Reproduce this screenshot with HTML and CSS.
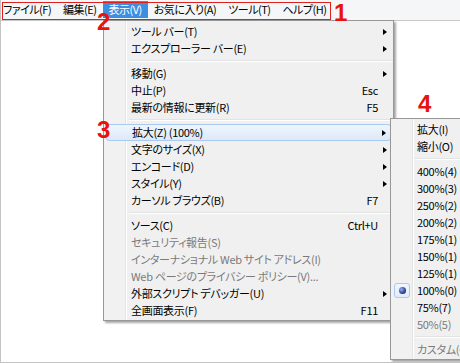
FILE: index.html
```html
<!DOCTYPE html>
<html lang="ja">
<head>
    <meta charset="UTF-8">
    <title>表示メニュー</title>
    <link rel="stylesheet" href="styles.css">
</head>
<body>
    <div class="window">
        <div class="menubar">
            <span class="top-item">ファイル(F)</span>
            <span class="top-item">編集(E)</span>
            <span class="top-item active">表示(V)</span>
            <span class="top-item">お気に入り(A)</span>
            <span class="top-item">ツール(T)</span>
            <span class="top-item">ヘルプ(H)</span>
        </div>
        <div class="page"></div>

        <div class="menu main-menu">
            <div class="item"><span class="label">ツール バー(T)</span><span class="arrow"></span></div>
            <div class="item"><span class="label">エクスプローラー バー(E)</span><span class="arrow"></span></div>
            <div class="sep"></div>
            <div class="item"><span class="label">移動(G)</span><span class="arrow"></span></div>
            <div class="item"><span class="label">中止(P)</span><span class="key">Esc</span></div>
            <div class="item"><span class="label">最新の情報に更新(R)</span><span class="key">F5</span></div>
            <div class="sep"></div>
            <div class="item hover"><span class="label">拡大(Z) (100%)</span><span class="arrow"></span></div>
            <div class="item"><span class="label">文字のサイズ(X)</span><span class="arrow"></span></div>
            <div class="item"><span class="label">エンコード(D)</span><span class="arrow"></span></div>
            <div class="item"><span class="label">スタイル(Y)</span><span class="arrow"></span></div>
            <div class="item"><span class="label">カーソル ブラウズ(B)</span><span class="key">F7</span></div>
            <div class="sep"></div>
            <div class="item"><span class="label">ソース(C)</span><span class="key">Ctrl+U</span></div>
            <div class="item disabled"><span class="label">セキュリティ報告(S)</span></div>
            <div class="item disabled"><span class="label">インターナショナル Web サイト アドレス(I)</span></div>
            <div class="item disabled"><span class="label">Web ページのプライバシー ポリシー(V)...</span></div>
            <div class="item"><span class="label">外部スクリプト デバッガー(U)</span><span class="arrow"></span></div>
            <div class="item"><span class="label">全画面表示(F)</span><span class="key">F11</span></div>
        </div>

        <div class="menu sub-menu">
            <div class="item"><span class="label">拡大(I)</span></div>
            <div class="item"><span class="label">縮小(O)</span></div>
            <div class="sep"></div>
            <div class="item"><span class="label">400%(4)</span></div>
            <div class="item"><span class="label">300%(3)</span></div>
            <div class="item"><span class="label">250%(2)</span></div>
            <div class="item"><span class="label">200%(2)</span></div>
            <div class="item"><span class="label">175%(1)</span></div>
            <div class="item"><span class="label">150%(1)</span></div>
            <div class="item"><span class="label">125%(1)</span></div>
            <div class="item checked"><span class="radio"><span class="dot"></span></span><span class="label">100%(0)</span></div>
            <div class="item"><span class="label">75%(7)</span></div>
            <div class="item disabled"><span class="label">50%(5)</span></div>
            <div class="sep"></div>
            <div class="item disabled"><span class="label">カスタム(C)...</span></div>
        </div>

        <div class="callout-box"></div>
        <span class="mark mark-1">1</span>
        <span class="mark mark-2">2</span>
        <span class="mark mark-3">3</span>
        <span class="mark mark-4">4</span>
    </div>
</body>
</html>
```

FILE: styles.css
```css
*{
    box-sizing: border-box;
}
body{
    margin: 0;
    font-family: "Noto Sans CJK JP", sans-serif;
    font-size: 11px;
    font-feature-settings: "palt";
    letter-spacing: -0.3px;
    color: #000;
    overflow: hidden;
}
.window{
    position: relative;
    width: 460px;
    height: 363px;
    border-left: 1px solid #c4c4c4;
    border-bottom: 1px solid #c4c4c4;
    background: #fff;
    display: flex;
    flex-direction: column;
    overflow: hidden;
}
.menubar{
    display: flex;
    height: 21px;
    padding: 1px 0 2px 0;
    background: #f5f6f7;
    border-bottom: 1px solid #c9c9c9;
    letter-spacing: -0.5px;
}
.top-item{
    padding: 0 6px;
    line-height: 17px;
}
.top-item:first-child{
    padding-left: 2px;
}
.top-item.active{
    background: #3c8ee0;
    color: #fff;
}
.page{
    flex: 1;
}

/* drop-down menus */
.menu{
    position: absolute;
    border: 1px solid #979797;
    box-shadow: 2px 2px 2px rgba(0, 0, 0, 0.35);
    padding: 2px 0 1px;
}
.main-menu{
    left: 102px;
    top: 20px;
    width: 291px;
    background: linear-gradient(to right, #f1f1f1 21px, #e2e3e3 21px 22px, #fff 22px 23px, #f0f0f0 23px);
}
.sub-menu{
    left: 389px;
    top: 118px;
    width: 110px;
    background: linear-gradient(to right, #f1f1f1 21px, #e2e3e3 21px 22px, #fff 22px 23px, #f0f0f0 23px);
}
.item{
    position: relative;
    display: flex;
    align-items: center;
    height: 17px;
    line-height: 17px;
    padding-left: 27px;
    white-space: nowrap;
}
.sub-menu .item{
    padding-left: 26px;
}
.label{
    flex: 1;
}
.key{
    padding-right: 15px;
}
.arrow{
    width: 0;
    height: 0;
    margin-right: 6px;
    border-top: 3px solid transparent;
    border-bottom: 3px solid transparent;
    border-left: 4px solid #000;
}
.disabled{
    color: #7a7a7a;
}
.hover{
    margin: 0 2px;
    padding-left: 25px;
    border: 1px solid #a9c9ef;
    border-radius: 3px;
    background: linear-gradient(#eef5fd, #dde9f8);
}
.hover .arrow{
    margin-right: 4px;
}
.sep{
    height: 1px;
    margin: 3px 0 3px 25px;
    background: #e2e3e3;
    border-bottom: 1px solid #fff;
    box-sizing: content-box;
}
.sub-menu .sep{
    margin-left: 24px;
}
.radio{
    position: absolute;
    left: 3px;
    top: 1px;
    width: 16px;
    height: 15px;
    border: 1px solid #a9c9ef;
    border-radius: 3px;
    background: linear-gradient(#f2f7fd, #e1ebf8);
    display: flex;
    align-items: center;
    justify-content: center;
}
.dot{
    width: 7px;
    height: 7px;
    border-radius: 50%;
    background: radial-gradient(circle at 35% 35%, #9aaee8, #1e2f8a 70%);
}

/* annotation marks */
.callout-box{
    position: absolute;
    left: 1px;
    top: 2px;
    width: 329px;
    height: 18px;
    border: 1px solid #e0201e;
}
.mark{
    position: absolute;
    font-family: "Liberation Sans", Arial, sans-serif;
    font-weight: bold;
    font-size: 24px;
    line-height: 24px;
    letter-spacing: 0;
    color: #e8120f;
}
.mark-1{
    left: 333px;
    top: 1px;
}
.mark-2{
    left: 96px;
    top: 10px;
}
.mark-3{
    left: 96px;
    top: 118px;
}
.mark-4{
    left: 417px;
    top: 92px;
}
```
